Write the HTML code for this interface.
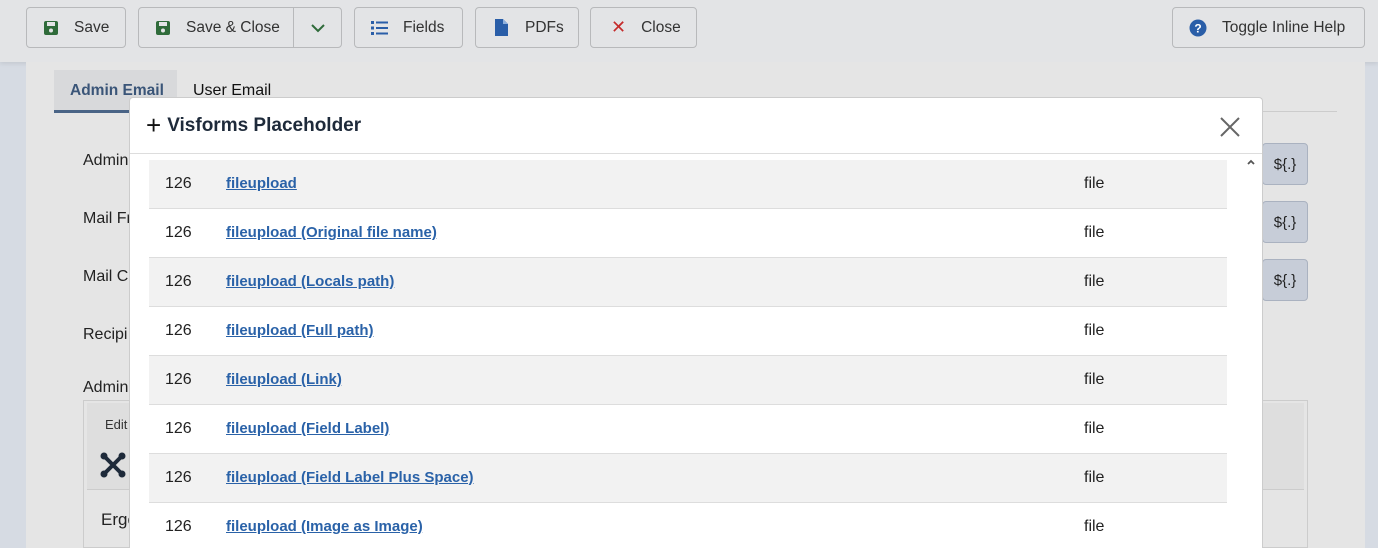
<!DOCTYPE html>
<html style="width:1378px;height:548px;overflow:hidden"><head><style>
*{box-sizing:border-box;margin:0;padding:0}
body{width:1378px;height:548px;overflow:hidden;font-family:"Liberation Sans",Arial,sans-serif;background:#d6dbe3;position:relative}
.toolbar{position:absolute;left:0;top:0;width:1378px;height:62px;background:#e3e4e6;box-shadow:0 2px 4px rgba(0,0,0,.08)}
.btn{position:absolute;top:7px;height:41px;border:1px solid #b8b9bb;border-radius:4px;background:#e3e4e6;font-size:15.5px;color:#333;display:flex;align-items:center;padding-left:16px}
.btn span.t{margin-left:15px}
.main{position:absolute;left:26px;top:62px;width:1339px;height:486px;background:#e5e5e5}
.lbl{position:absolute;left:83px;font-size:16px;color:#222}
.dol{position:absolute;left:1262px;width:46px;height:42px;background:#c7cdd8;border:1px solid #aab2c0;border-radius:4px;font-size:15px;color:#222;display:flex;align-items:center;justify-content:center}
.modal{position:absolute;left:129px;top:97px;width:1134px;height:451px;overflow:hidden;background:#fff;border-radius:4px 4px 0 0;border:1px solid #ccc;border-bottom:none}
.mh{height:56px;border-bottom:1px solid #ddd;display:flex;align-items:center;padding-left:16px;font-size:19px;font-weight:bold;color:#1e2a3a}
.row{position:absolute;left:19px;width:1078px;height:49px;border-bottom:1px solid #ddd;font-size:16px;color:#222}
.row.g{background:#f2f2f2}
.row .n{position:absolute;left:16px;top:15px}
.row a{position:absolute;left:77px;top:15px;color:#2a62a8;font-weight:bold;text-decoration:underline;font-size:15px}
.row .f{position:absolute;left:935px;top:15px}
</style></head><body>
<div class="toolbar">
<div class="btn" style="left:26px;width:100px"><svg width="16" height="16" viewBox="0 0 16 16"><rect x="1" y="1" width="14" height="14" rx="2" fill="#2f6b3a"/><rect x="4" y="2" width="8" height="4" fill="#e3e4e6"/><circle cx="8" cy="10.5" r="2" fill="#e3e4e6"/></svg><span class="t">Save</span></div>
<div class="btn" style="left:138px;width:204px"><svg width="16" height="16" viewBox="0 0 16 16"><rect x="1" y="1" width="14" height="14" rx="2" fill="#2f6b3a"/><rect x="4" y="2" width="8" height="4" fill="#e3e4e6"/><circle cx="8" cy="10.5" r="2" fill="#e3e4e6"/></svg><span class="t">Save &amp; Close</span>
<div style="position:absolute;left:154px;top:0;width:1px;height:39px;background:#b8b9bb"></div>
<svg style="position:absolute;left:171px;top:14px" width="16" height="12" viewBox="0 0 16 12"><path d="M2 3l6 6 6-6" stroke="#2f6b3a" stroke-width="2" fill="none"/></svg></div>
<div class="btn" style="left:354px;width:109px"><svg width="17" height="14" viewBox="0 0 17 14"><g fill="#2a5ea8"><rect x="0" y="0" width="3" height="3"/><rect x="0" y="5.5" width="3" height="3"/><rect x="0" y="11" width="3" height="3"/><rect x="5" y="0.5" width="12" height="2"/><rect x="5" y="6" width="12" height="2"/><rect x="5" y="11.5" width="12" height="2"/></g></svg><span class="t">Fields</span></div>
<div class="btn" style="left:475px;width:104px;padding-left:19px"><svg width="13" height="17" viewBox="0 0 13 17"><path d="M0 0h8l5 5v12H0z" fill="#2a5ea8"/><path d="M8 0v5h5" fill="#8fb0dc"/></svg><span class="t" style="margin-left:17px">PDFs</span></div>
<div class="btn" style="left:590px;width:107px;padding-left:20px"><span style="color:#c52b2b;font-size:18px">✕</span><span class="t">Close</span></div>
<div class="btn" style="left:1172px;width:193px"><svg width="18" height="18" viewBox="0 0 18 18"><circle cx="9" cy="9" r="8.5" fill="#2a5ea8"/><text x="9" y="13.5" font-size="12" font-weight="bold" fill="#fff" text-anchor="middle" font-family="Liberation Sans">?</text></svg><span class="t">Toggle Inline Help</span></div>
</div>
<div class="main"></div>
<div style="position:absolute;left:54px;top:70px;width:123px;height:43px;background:#d8d9db;border-bottom:3px solid #4a6486"></div>
<div style="position:absolute;left:70px;top:82px;font-size:15.5px;font-weight:bold;color:#3a5578">Admin Email</div>
<div style="position:absolute;left:193px;top:82px;font-size:16px;color:#111">User Email</div>
<div style="position:absolute;left:177px;top:111px;width:1160px;height:1px;background:#ccc"></div>
<div class="lbl" style="top:152px">Admin</div>
<div class="lbl" style="top:210px">Mail Fr</div>
<div class="lbl" style="top:268px">Mail C</div>
<div class="lbl" style="top:326px">Recipi</div>
<div class="lbl" style="top:379px">Admin</div>
<div class="dol" style="top:143px">${.}</div>
<div class="dol" style="top:201px">${.}</div>
<div class="dol" style="top:259px">${.}</div>
<div style="position:absolute;left:83px;top:400px;width:1225px;height:148px;border:1px solid #ccc;background:#e5e5e5"></div>
<div style="position:absolute;left:87px;top:403px;width:1217px;height:87px;background:#dedede;border-bottom:1px solid #ccc"></div>
<div style="position:absolute;left:105px;top:417px;font-size:13px;color:#333">Edit</div>
<svg style="position:absolute;left:100px;top:452px" width="26" height="26" viewBox="0 0 26 26"><g stroke="#1e2a3a" stroke-width="4" fill="none"><path d="M5 5L21 21M21 5L5 21"/></g><g fill="#1e2a3a"><circle cx="4" cy="4" r="3.5"/><circle cx="22" cy="4" r="3.5"/><circle cx="4" cy="22" r="3.5"/><circle cx="22" cy="22" r="3.5"/></g></svg>
<div style="position:absolute;left:101px;top:510px;font-size:17px;color:#222">Erge</div>
<div class="modal">
<div class="mh"><span style="font-size:26px;font-weight:normal;margin-right:6px;color:#111">+</span>Visforms Placeholder</div>
<svg style="position:absolute;left:1090px;top:19px" width="20" height="20" viewBox="0 0 20 20"><path d="M1 1L19 19M19 1L1 19" stroke="#666" stroke-width="2"/></svg>
<svg style="position:absolute;left:1116px;top:60px" width="10" height="8" viewBox="0 0 10 8"><path d="M2 6l3-3 3 3" stroke="#555" stroke-width="1.8" fill="none"/></svg>
<div class="row g" style="top:62px"><span class="n">126</span><a>fileupload</a><span class="f">file</span></div>
<div class="row" style="top:111px"><span class="n">126</span><a>fileupload (Original file name)</a><span class="f">file</span></div>
<div class="row g" style="top:160px"><span class="n">126</span><a>fileupload (Locals path)</a><span class="f">file</span></div>
<div class="row" style="top:209px"><span class="n">126</span><a>fileupload (Full path)</a><span class="f">file</span></div>
<div class="row g" style="top:258px"><span class="n">126</span><a>fileupload (Link)</a><span class="f">file</span></div>
<div class="row" style="top:307px"><span class="n">126</span><a>fileupload (Field Label)</a><span class="f">file</span></div>
<div class="row g" style="top:356px"><span class="n">126</span><a>fileupload (Field Label Plus Space)</a><span class="f">file</span></div>
<div class="row" style="top:405px"><span class="n">126</span><a>fileupload (Image as Image)</a><span class="f">file</span></div>
</div>
</body></html>
